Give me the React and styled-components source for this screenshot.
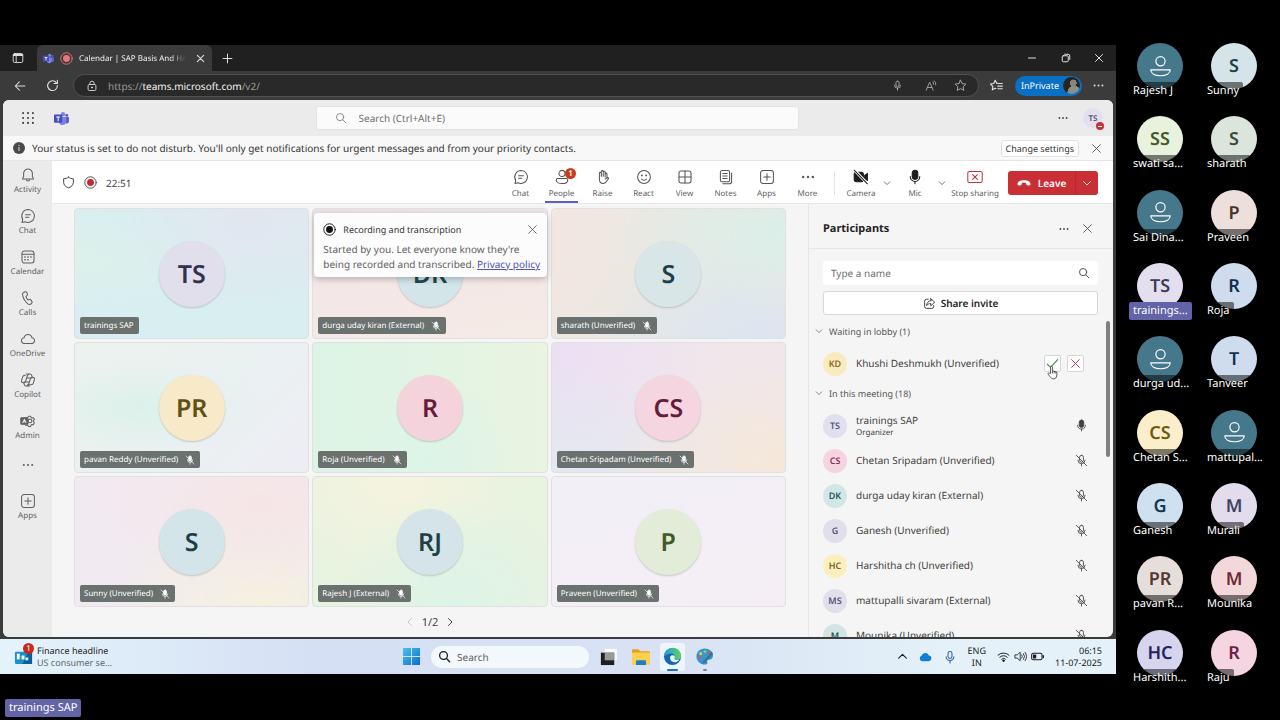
import { useState } from "react";
import styled, { createGlobalStyle, css } from "styled-components";

const people = [
  { name: "Rajesh J" },
  { name: "Sunny", initials: "S", bg: "#d5e4e9", fg: "#1d4046" },
  { name: "swati sa...", initials: "SS", bg: "#e8f2dc", fg: "#44592a" },
  { name: "sharath", initials: "S", bg: "#dbe5dc", fg: "#3a4a38" },
  { name: "Sai Dina..." },
  { name: "Praveen", initials: "P", bg: "#ecdfdc", fg: "#4d322c" },
  { name: "trainings...", initials: "TS", bg: "#e4dfee", fg: "#3f3a5c", active: true },
  { name: "Roja", initials: "R", bg: "#cfdcee", fg: "#12304f" },
  { name: "durga ud..." },
  { name: "Tanveer", initials: "T", bg: "#cfdcee", fg: "#12304f" },
  { name: "Chetan S...", initials: "CS", bg: "#fbeecb", fg: "#6d5a10" },
  { name: "mattupal..." },
  { name: "Ganesh", initials: "G", bg: "#cfe0ee", fg: "#0f3a55" },
  { name: "Murali", initials: "M", bg: "#e2dcec", fg: "#463f66" },
  { name: "pavan R...", initials: "PR", bg: "#e6dedb", fg: "#54392f" },
  { name: "Mounika", initials: "M", bg: "#f2d8da", fg: "#6e2a38" },
  { name: "Harshith...", initials: "HC", bg: "#d7d5ee", fg: "#26235e" },
  { name: "Raju", initials: "R", bg: "#f5d5e1", fg: "#702044" },
];

const tiles = [
  {
    name: "trainings SAP", initials: "TS", bg: "#e2dfec", fg: "#34304f", muted: false,
    wash: "radial-gradient(at 75% 10%, #e2e6f0 0, transparent 55%), radial-gradient(at 0% 40%, #dcf1ea 0, transparent 50%), #d9eef1",
  },
  {
    name: "durga uday kiran (External)", initials: "DK", bg: "#d3e5e9", fg: "#1d4a4d", muted: true, notice: true,
    wash: "linear-gradient(170deg, #eee3e6 0%, #f3e7e8 50%, #f5ebe4 100%)",
  },
  {
    name: "sharath (Unverified)", initials: "S", bg: "#d8e6e8", fg: "#1d4046", muted: true,
    wash: "radial-gradient(at 100% 20%, #dbefe8 0, transparent 55%), radial-gradient(at 90% 100%, #dbe5f1 0, transparent 55%), linear-gradient(120deg, #f4e6e0, #e8e8e4 55%)",
  },
  {
    name: "pavan Reddy (Unverified)", initials: "PR", bg: "#f8e9c8", fg: "#5f5110", muted: true,
    wash: "radial-gradient(at 30% 50%, #dcf1ea 0, transparent 50%), linear-gradient(135deg, #ecf2ee, #eaf1f1 50%, #ededf4)",
  },
  {
    name: "Roja (Unverified)", initials: "R", bg: "#f4d3dc", fg: "#651c3c", muted: true,
    wash: "radial-gradient(at 50% 90%, #dcf4e8 0, transparent 50%), linear-gradient(90deg, #dcf4e6, #e9f4e1)",
  },
  {
    name: "Chetan Sripadam (Unverified)", initials: "CS", bg: "#f4d5e0", fg: "#651c3c", muted: true,
    wash: "radial-gradient(at 100% 90%, #f5e8d9 0, transparent 55%), radial-gradient(at 10% 100%, #e3e9f0 0, transparent 60%), linear-gradient(100deg, #ebdff5, #f1e7ea 70%)",
  },
  {
    name: "Sunny (Unverified)", initials: "S", bg: "#d3e5e9", fg: "#1d4046", muted: true,
    wash: "radial-gradient(at 80% 20%, #f6e5e6 0, transparent 60%), radial-gradient(at 80% 100%, #f5f1df 0, transparent 60%), #f1eaf1",
  },
  {
    name: "Rajesh J (External)", initials: "RJ", bg: "#d4e4e8", fg: "#1d4046", muted: true,
    wash: "radial-gradient(at 60% 100%, #dcf4e8 0, transparent 60%), radial-gradient(at 35% 0%, #f6f3df 0, transparent 60%), #e8f3e0",
  },
  {
    name: "Praveen (Unverified)", initials: "P", bg: "#e3ecd8", fg: "#44592a", muted: true,
    wash: "linear-gradient(160deg, #f2eff6, #f5eef5)",
  },
];

const attendees = [
  { name: "trainings SAP", role: "Organizer", initials: "TS", bg: "#e0e0ee", fg: "#56567a", live: true },
  { name: "Chetan Sripadam (Unverified)", initials: "CS", bg: "#f6d3e0", fg: "#8c2f57" },
  { name: "durga uday kiran (External)", initials: "DK", bg: "#d3e6e6", fg: "#275a5c" },
  { name: "Ganesh (Unverified)", initials: "G", bg: "#e1dfec", fg: "#56527a" },
  { name: "Harshitha ch (Unverified)", initials: "HC", bg: "#fbf0bd", fg: "#7d671c" },
  { name: "mattupalli sivaram (External)", initials: "MS", bg: "#e0dfea", fg: "#56527a" },
  { name: "Mounika (Unverified)", initials: "M", bg: "#d3e4e2", fg: "#24524e" },
];

const paths = {
  activity: <><path d="M10 2.5a5.5 5.5 0 0 0-5.5 5.5v4L3 15h14l-1.500-3V8A5.500 5.500 0 0 0 10 2.500z" /><path d="M8 15.500a2 2 0 0 0 4 0" /></>,
  chat: <><path d="M10 2a8 8 0 1 1-3.700 15.100L2.500 18l.9-3.800A8 8 0 0 1 10 2z" /><path d="M7 8.500h6M7 11.500h4" /></>,
  calendar: <><rect x="2.500" y="2.500" width="15" height="15" rx="3" /><path d="M2.500 6.500h15" /><path d="M6 10h.5M9.700 10h.5M13.400 10h.5M6 13.500h.5M9.700 13.500h.5" strokeWidth="1.700" /></>,
  calls: <path d="M6.200 2.300 4.600 3c-1.300.6-1.700 2-1.400 3.500.9 4.300 3.300 8.200 6.600 10.800 1.200.9 2.600 1.100 3.700.2l1.100-1c.7-.6.8-1.500.3-2.200l-1.400-1.900c-.4-.6-1.200-.8-1.800-.5l-1.700.6C8.700 11.200 7.800 9.600 7.500 8l1.300-1.200c.5-.5.7-1.100.5-1.800l-.8-2c-.4-.7-1.400-1.100-2.300-.7z" />,
  cloud: <path d="M5.500 15.500a3.500 3.500 0 0 1-.4-7 5 5 0 0 1 9.800 0 3.500 3.500 0 0 1-.4 7z" />,
  copilot: <><path d="M8 2.500h4.500c1 0 1.700.6 2 1.500l.7 2.500h.8c2 0 2.500 1.300 2 3l-1.200 4c-.5 1.700-1.300 2.500-2.800 2.500H9.500" /><path d="M12 17.500H7.500c-1 0-1.700-.6-2-1.500l-.7-2.500H4c-2 0-2.500-1.300-2-3l1.200-4C3.700 4.800 4.500 4 6 4h1" /><path d="M11 2.700c-1 .3-1.500 1-1.800 2L6.800 12c-.3 1-.8 1.500-1.800 1.500M9 17.300c1-.3 1.500-1 1.800-2L13.200 8c.3-1 .8-1.500 1.800-1.500M8.300 7.500H15M5 12.500h6.700" /></>,
  admin: <><path d="M7 5.500 9.500 6l1.300-2h2.400l1 2.300 2.500-.3 1.300 2.200-1.500 2 1.500 2-1.300 2.500-2.500-.2-1 2.300h-2.400L9.500 15l-2.500.5" /><rect x="1" y="6" width="9" height="8" rx="1" fill="currentColor" /><circle cx="12.500" cy="10" r="2.300" /><path d="M3.500 12 5.500 8l2 4M4.200 11h2.500" stroke="#ebebeb" /></>,
  apps: <><rect x="2" y="2" width="16" height="16" rx="3" /><path d="M10 6v8M6 10h8" /></>,
  dots: <g fill="currentColor" stroke="none"><circle cx="4" cy="10" r="1.500" /><circle cx="10" cy="10" r="1.500" /><circle cx="16" cy="10" r="1.500" /></g>,
  people: <><circle cx="10" cy="5.500" r="3.800" /><path d="M4.500 12h11c1 0 1.700.7 1.700 1.600 0 3-3.200 4.600-7.200 4.600s-7.200-1.600-7.200-4.600c0-.9.700-1.600 1.700-1.600z" /></>,
  raise: <path d="M5.500 11V5.200a1.200 1.200 0 0 1 2.400 0V9M7.900 9V3.200a1.200 1.200 0 0 1 2.400 0V9M10.300 9V3.900a1.200 1.200 0 0 1 2.400 0v6M12.700 10V6a1.200 1.200 0 0 1 2.300 0v5.500M5.500 11v1.500c0 3.500 1.800 5.700 4.500 5.700 2 0 3.300-.9 4.200-2.600l2.700-3.600c.5-1-.9-1.900-1.900-1.100l-2.300 1.700M5.500 5.500v6" />,
  react: <><circle cx="10" cy="10" r="8" /><path d="M6.800 12.500a4.200 4.200 0 0 0 6.400 0" /><g fill="currentColor" stroke="none"><circle cx="7.400" cy="8" r="1.200" /><circle cx="12.600" cy="8" r="1.200" /></g></>,
  view: <><rect x="2.500" y="2.500" width="15" height="15" rx="2.500" /><path d="M10 2.500v15M2.500 10h15" /></>,
  notes: <><rect x="3" y="2" width="11.500" height="14" rx="2" /><path d="M6 5.500h5.500M6 8.700h5.500M6 12h5.500M17 5v10.500a3 3 0 0 1-3 3H6" /></>,
  camera: <><rect x="1.500" y="4" width="11.500" height="12" rx="2.500" fill="currentColor" /><path d="m14 8.500 4-3v9l-4-3z" fill="currentColor" /><path d="m2 1.500 16 17" stroke="#fff" strokeWidth="3.400" /><path d="m1.500 1.500 16.500 17" /></>,
  mic: <><rect x="6.500" y="1.500" width="7" height="11.500" rx="3.500" fill="currentColor" /><path d="M4 9.500a6 6 0 0 0 12 0M10 15.500v3" /></>,
  micLine: <><rect x="7.200" y="2" width="5.600" height="10" rx="2.800" /><path d="M4.500 9.500a5.500 5.500 0 0 0 11 0M10 15v3.500" /></>,
  micOff: <><rect x="7" y="2" width="6" height="10.500" rx="3" /><path d="M4.500 9.500a5.500 5.500 0 0 0 11 0M10 15v3.500M2 2l16 16" /></>,
  micOffSolid: <><rect x="7" y="2" width="6" height="10.500" rx="3" fill="currentColor" /><path d="M4.500 9.500a5.500 5.500 0 0 0 11 0M10 15v3.500M2 2l16 16" /></>,
  stop: <><rect x="1" y="3" width="18" height="14" rx="2" /><path d="m7 7 6 6M13 7l-6 6" /></>,
  down: <path d="m3 7 7 7 7-7" />,
  up: <path d="m3 13 7-7 7 7" />,
  left: <path d="m13 3-7 7 7 7" />,
  right: <path d="m7 3 7 7-7 7" />,
  close: <path d="m3 3 14 14M17 3 3 17" />,
  plus: <path d="M10 2v16M2 10h16" />,
  check: <path d="m2 11 5 5L18 4" />,
  search: <><circle cx="8.500" cy="8.500" r="6" /><path d="m13 13 5 5" /></>,
  shield: <path d="M10 1.800c2.300 1.700 4.700 2.400 7.500 2.500v5.200c0 4.200-2.700 7-7.500 8.700-4.800-1.700-7.500-4.500-7.500-8.700V4.300c2.800-.1 5.200-.8 7.500-2.500z" />,
  share: <><path d="M8 3.500H5.500a3 3 0 0 0-3 3v8a3 3 0 0 0 3 3h8a3 3 0 0 0 3-3V13" /><path d="M12 2.500 18 8l-6 5.500v-3.300c-3 0-5 .8-6.500 3C5.800 9 8 6 12 5.700z" /></>,
  back: <path d="M18 10H2.500M9 3l-7 7 7 7" />,
  reload: <><path d="M16.500 6.500A7.500 7.500 0 1 0 17.500 10" /><path d="M17.500 2v5h-5" /></>,
  lock: <><rect x="3.500" y="7.500" width="13" height="10" rx="2" /><path d="M6.500 7.500V5.500a3.500 3.500 0 0 1 7 0v2" /><circle cx="10" cy="12.500" r="1" fill="currentColor" /></>,
  star: <path d="m10 1.800 2.500 5.200 5.700.8-4.100 4 1 5.700-5.100-2.700-5.100 2.700 1-5.700-4.100-4 5.700-.8z" />,
  favorites: <><path d="M12.300 6.500 10.500 7 8 2 5.700 7l-5 .8 3.700 3.600-.9 5.300L8 14.200l1 .5" /><path d="M13 7h6M12 11h7M12 15h7" /></>,
  readAloud: <><path d="m2 17 5.500-13h.6L13.500 17M4 12.500h7.500" /><path d="M13 3a4 4 0 0 1 1.500 4M15.500 1.500A7 7 0 0 1 18 8" /></>,
  tabs: <><rect x="2" y="2.500" width="16" height="15" rx="2.500" /><path d="M3 5h14" strokeWidth="3" /><path d="M7 6v11" /></>,
  minimize: <path d="M3 10h14" />,
  restore: <><rect x="2.500" y="5.500" width="12" height="12" rx="2" /><path d="M6 3.200c.4-.5 1-.7 1.700-.7H14a3.500 3.500 0 0 1 3.500 3.500v6.300c0 .7-.3 1.300-.8 1.700" /></>,
  wifi: <><path d="M1.500 8a12 12 0 0 1 17 0M4.300 11a8 8 0 0 1 11.400 0M7.200 14a4 4 0 0 1 5.600 0" /><circle cx="10" cy="16.500" r="1.200" fill="currentColor" /></>,
  sound: <><path d="M2 7.500h3L9.500 3.500v13L5 12.500H2z" /><path d="M12 7.500a4 4 0 0 1 0 5M14.500 5.500a7 7 0 0 1 0 9M17 3.500a10 10 0 0 1 0 13" /></>,
  battery: <><rect x="1" y="5" width="16" height="10" rx="2.500" /><path d="M19 8.500v3" strokeWidth="2" /><rect x="3" y="7" width="5" height="6" fill="currentColor" stroke="none" /></>,
};

const Icon = ({ name, size = 16, weight = 1.3 }) => (
  <Glyph viewBox="0 0 20 20" $size={size} $weight={weight} aria-hidden="true">
    {paths[name]}
  </Glyph>
);

const TeamsLogo = ({ size = 16 }) => (
  <Glyph viewBox="0 0 20 20" $size={size} $weight={0} aria-hidden="true">
    <g stroke="none">
      <circle cx="17" cy="5.500" r="2" fill="#5b62c5" />
      <circle cx="12" cy="4.200" r="2.900" fill="#7b83eb" />
      <path d="M14 8h5.200c.5 0 .8.300.8.800v4.700a3.200 3.200 0 0 1-6 1.500z" fill="#5b62c5" />
      <path d="M7 8h8c.6 0 1 .4 1 1v5a4.700 4.700 0 0 1-9.300 1z" fill="#7b83eb" />
      <rect x="0" y="4.500" width="11" height="11" rx="1" fill="#464eb8" />
      <path d="M3 7.200h5v1.300H6.200v5H4.800v-5H3z" fill="#fff" />
    </g>
  </Glyph>
);

const PersonGlyph = () => (
  <Glyph viewBox="0 0 20 20" $size={21} $weight={1.1} aria-hidden="true">
    <circle cx="10" cy="5" r="4.400" />
    <path d="M.7 13.200h18.600c0 3.500-4 5.600-9.300 5.600S.7 16.700.7 13.200z" />
  </Glyph>
);

const RecordDot = ({ color, ring }) => (
  <Glyph viewBox="0 0 20 20" $size={13} $weight={1.4} aria-hidden="true">
    <circle cx="10" cy="10" r="8.800" stroke={ring} />
    <circle cx="10" cy="10" r="5.300" fill={color} stroke="none" />
  </Glyph>
);

const railItems = [
  ["activity", "Activity"],
  ["chat", "Chat"],
  ["calendar", "Calendar"],
  ["calls", "Calls"],
  ["cloud", "OneDrive"],
  ["copilot", "Copilot"],
  ["admin", "Admin"],
];

const tools = [
  ["chat", "Chat"],
  ["people", "People"],
  ["raise", "Raise"],
  ["react", "React"],
  ["view", "View"],
  ["notes", "Notes"],
  ["apps", "Apps"],
  ["dots", "More"],
];

const Person = ({ person }) => (
  <PersonRow>
    <SmallAvatar $bg={person.bg} $fg={person.fg}>{person.initials}</SmallAvatar>
    <PersonText>
      {person.name}
      {person.role && <Role>{person.role}</Role>}
    </PersonText>
    {person.live ? <Icon name="mic" size={13} /> : <Icon name="micOff" size={13} />}
  </PersonRow>
);

const App = () => {
  const [panel, setPanel] = useState("People");
  const [noticeOpen, setNoticeOpen] = useState(true);

  return (
    <>
      <GlobalStyle />
      <Screen>
        <SharedScreen>
          <Browser>
            {/* TABS */}
            <TabStrip>
              <BrowserButton aria-label="Tab actions" $width={29}><Icon name="tabs" size={12} weight={1.5} /></BrowserButton>
              <Tab>
                <TeamsLogo size={11} />
                <RecordDot color="#e8757c" ring="#e8757c" />
                <TabTitle>Calendar | SAP Basis And HA</TabTitle>
                <BrowserButton aria-label="Close tab" $width={16}><Icon name="close" size={9} weight={2.4} /></BrowserButton>
              </Tab>
              <BrowserButton aria-label="New tab" $width={30}><Icon name="plus" size={11} weight={1.8} /></BrowserButton>
              <WindowButtons>
                <BrowserButton aria-label="Minimize" $width={34}><Icon name="minimize" size={10} weight={2} /></BrowserButton>
                <BrowserButton aria-label="Restore" $width={33}><Icon name="restore" size={10} weight={2} /></BrowserButton>
                <BrowserButton aria-label="Close" $width={34}><Icon name="close" size={10} weight={2} /></BrowserButton>
              </WindowButtons>
            </TabStrip>

            {/* ADDRESS BAR */}
            <AddressRow>
              <BrowserButton aria-label="Back" $width={32}><Icon name="back" size={12} weight={1.700} /></BrowserButton>
              <BrowserButton aria-label="Refresh" $width={32}><Icon name="reload" size={13} weight={1.7} /></BrowserButton>
              <Address>
                <Icon name="lock" size={12} weight={1.600} />
                <Url>https://<b>teams.microsoft.com</b>/v2/</Url>
                <AddressIcons>
                  <Icon name="micLine" size={11} weight={1.700} />
                  <Icon name="readAloud" size={12} weight={1.500} />
                  <Icon name="star" size={13} weight={1.500} />
                </AddressIcons>
              </Address>
              <BrowserButton aria-label="Favorites" $width={36}><Icon name="favorites" size={13} weight={1.700} /></BrowserButton>
              <InPrivate>
                InPrivate
                <ProfilePhoto />
              </InPrivate>
              <BrowserButton aria-label="Settings and more" $width={32}><Icon name="dots" size={13} /></BrowserButton>
            </AddressRow>

            <WebView>
              <TeamsHeader>
                <HeaderLeft>
                  <IconButton aria-label="App launcher" $width={24}>
                    <Glyph viewBox="0 0 20 20" $size={14} $weight={0}>
                      {[3, 10, 17].map((y) => [3, 10, 17].map((x) => (
                        <circle key={`${x}-${y}`} cx={x} cy={y} r="1.500" fill="#444" stroke="none" />
                      )))}
                    </Glyph>
                  </IconButton>
                  <TeamsLogo size={15} />
                </HeaderLeft>
                <TopSearch>
                  <Icon name="search" size={12} />
                  <TopSearchInput aria-label="Search" placeholder="Search (Ctrl+Alt+E)" />
                </TopSearch>
                <HeaderRight>
                  <IconButton aria-label="Settings and more" $width={24}><Icon name="dots" size={12} /></IconButton>
                  <ProfileBadge>
                    TS
                    <Presence />
                  </ProfileBadge>
                </HeaderRight>
              </TeamsHeader>

              <StatusBanner>
                <Info viewBox="0 0 12 12" aria-hidden="true">
                  <circle cx="6" cy="6" r="6" fill="#4a4a4a" />
                  <path d="M6 5v4M6 3v1" stroke="#ddd" />
                </Info>
                <BannerText>
                  Your status is set to do not disturb. You'll only get notifications for urgent messages and from your priority contacts.
                </BannerText>
                <ChangeSettings>Change settings</ChangeSettings>
                <IconButton aria-label="Dismiss" $width={34}><Icon name="close" size={11} weight={1.500} /></IconButton>
              </StatusBanner>

              <TeamsBody>
                <Rail>
                  {railItems.map(([icon, label]) => (
                    <RailItem key={label}>
                      <Icon name={icon} size={16} />
                      {label}
                    </RailItem>
                  ))}
                  <RailMore aria-label="More apps"><Icon name="dots" size={14} /></RailMore>
                  <RailItem><Icon name="apps" size={16} />Apps</RailItem>
                </Rail>

                <Meeting>
                  {/* MEETING TOOLBAR */}
                  <Toolbar>
                    <Timer>
                      <Icon name="shield" size={13} weight={1.500} />
                      <RecordDot color="#c4282d" ring="#444" />
                      22:51
                    </Timer>
                    {tools.map(([icon, label]) => (
                      <Tool key={label} $active={label === panel} onClick={() => setPanel(label)}>
                        <Icon name={icon} size={16} />
                        {label}
                        {label === "People" && <ToolBadge>1</ToolBadge>}
                      </Tool>
                    ))}
                    <ToolDivider />
                    <Tool $width={36} $dark><Icon name="camera" size={16} />Camera</Tool>
                    <IconButton aria-label="Camera options" $width={16}><Icon name="down" size={8} weight={1.800} /></IconButton>
                    <Tool $width={40} $dark><Icon name="mic" size={16} />Mic</Tool>
                    <IconButton aria-label="Mic options" $width={14}><Icon name="down" size={8} weight={1.800} /></IconButton>
                    <Tool $width={52} $danger><Icon name="stop" size={16} />Stop sharing</Tool>
                    <LeaveGroup>
                      <Leave>
                        <Glyph viewBox="0 0 20 20" $size={14} $weight={0} aria-hidden="true">
                          <path d="M10 6c5 0 9.500 2 9.300 5.600-.1 1.600-.8 2.300-2.200 2l-2.500-.5c-.9-.2-1.300-.8-1.400-1.700l-.1-1.300c-2-.6-4.200-.6-6.200 0l-.1 1.300c-.1.900-.5 1.500-1.400 1.700l-2.500.5c-1.400.3-2.100-.4-2.200-2C.5 8 5 6 10 6z" fill="currentColor" />
                        </Glyph>
                        Leave
                      </Leave>
                      <LeaveMore aria-label="Leave options"><Icon name="down" size={10} weight={1.800} /></LeaveMore>
                    </LeaveGroup>
                  </Toolbar>

                  <MeetingBody>
                    <Stage>
                      <Gallery>
                        {tiles.map((tile) => (
                          <Tile key={tile.name} $wash={tile.wash}>
                            <BigAvatar $bg={tile.bg} $fg={tile.fg}>{tile.initials}</BigAvatar>
                            <TileName>
                              {tile.name}
                              {tile.muted && <Icon name="micOffSolid" size={10} weight={1.300} />}
                            </TileName>
                            {tile.notice && noticeOpen && (
                              <Notice>
                                <NoticeHead>
                                  <RecordDot color="#111" ring="#111" />
                                  <NoticeTitle>Recording and transcription</NoticeTitle>
                                  <IconButton aria-label="Close" $width={16} onClick={() => setNoticeOpen(false)}>
                                    <Icon name="close" size={11} weight={1.400} />
                                  </IconButton>
                                </NoticeHead>
                                Started by you. Let everyone know they're being recorded and transcribed.{" "}
                                <PolicyLink href="#privacy">Privacy policy</PolicyLink>
                              </Notice>
                            )}
                          </Tile>
                        ))}
                      </Gallery>
                      <Pager>
                        <PageButton aria-label="Previous page" disabled><Icon name="left" size={10} weight={1.700} /></PageButton>
                        1/2
                        <PageButton aria-label="Next page"><Icon name="right" size={10} weight={2} /></PageButton>
                      </Pager>
                    </Stage>

                    {/* PARTICIPANTS */}
                    <Panel>
                      <PanelHead>
                        <PanelTitle>Participants</PanelTitle>
                        <IconButton aria-label="More options" $width={24}><Icon name="dots" size={12} /></IconButton>
                        <IconButton aria-label="Close panel" $width={22}><Icon name="close" size={11} weight={1.500} /></IconButton>
                      </PanelHead>
                      <PanelActions>
                        <NameField>
                          <NameInput aria-label="Type a name" placeholder="Type a name" />
                          <Icon name="search" size={12} weight={1.500} />
                        </NameField>
                        <ShareInvite><Icon name="share" size={13} />Share invite</ShareInvite>
                      </PanelActions>
                      <PeopleList>
                        <Section><Icon name="down" size={8} weight={1.700} />Waiting in lobby (1)</Section>
                        <PersonRow>
                          <SmallAvatar $bg="#f8ebbd" $fg="#86701f">KD</SmallAvatar>
                          <PersonText>Khushi Deshmukh (Unverified)</PersonText>
                          <LobbyButtons>
                            <LobbyButton aria-label="Admit" $color="#3a8a3f">
                              <Icon name="check" size={13} weight={1.600} />
                              <Pointer viewBox="0 0 14 18" aria-hidden="true">
                                <path d="M4.500 10V2.200a1.200 1.200 0 0 1 2.400 0V7l4.500 1c1 .2 1.500.9 1.400 1.900l-.5 3.600c-.2 1.800-1.300 3.500-3.300 3.500H7.500c-1.300 0-2-.5-2.700-1.600L1.300 11c-.5-1 .8-1.800 1.600-1.100z" fill="#fff" stroke="#333" />
                                <path d="M7 7v3M9.200 7.500V10M11.300 8v2.500" stroke="#333" />
                              </Pointer>
                            </LobbyButton>
                            <LobbyButton aria-label="Deny" $color="#c4314b"><Icon name="close" size={11} weight={1.700} /></LobbyButton>
                          </LobbyButtons>
                        </PersonRow>
                        <Section><Icon name="down" size={8} weight={1.700} />In this meeting (18)</Section>
                        {attendees.map((person) => (
                          <Person key={person.name} person={person} />
                        ))}
                        <ScrollThumb />
                      </PeopleList>
                    </Panel>
                  </MeetingBody>
                </Meeting>
              </TeamsBody>
            </WebView>
          </Browser>

          {/* TASKBAR */}
          <Taskbar>
            <Widget>
              <WidgetIcon>
                <Glyph viewBox="0 0 20 20" $size={19} $weight={0} aria-hidden="true">
                  <rect x="1" y="5" width="18" height="13" rx="1.500" fill="#1893c9" />
                  <path d="M15 5h4v13H9z" fill="#0a5f9c" />
                  <rect x="3" y="7" width="3" height="6" fill="#fff" />
                  <rect x="8" y="9" width="3" height="4" fill="#fff" />
                  <rect x="12" y="11" width="3" height="3" fill="#dff" />
                </Glyph>
                <WidgetBadge>1</WidgetBadge>
              </WidgetIcon>
              <WidgetText>
                <strong>Finance headline</strong>
                US consumer se...
              </WidgetText>
            </Widget>

            <TaskIcons>
              <TaskButton aria-label="Start">
                <Glyph viewBox="0 0 20 20" $size={19} $weight={0}>
                  <defs>
                    <linearGradient id="win" x1="0" y1="0" x2="1" y2="1">
                      <stop offset="0" stopColor="#4cc2ee" />
                      <stop offset="1" stopColor="#0a6fcb" />
                    </linearGradient>
                  </defs>
                  <path d="M1 1h8.500v8.500H1zM10.500 1H19v8.500h-8.500zM1 10.500h8.500V19H1zM10.500 10.500H19V19h-8.500z" fill="url(#win)" />
                </Glyph>
              </TaskButton>
              <TaskSearch>
                <Icon name="search" size={13} weight={2} />
                <TaskInput aria-label="Search Windows" placeholder="Search" />
              </TaskSearch>
              <TaskButton aria-label="Task view">
                <Glyph viewBox="0 0 20 20" $size={19} $weight={0}>
                  <rect x="6" y="2" width="13" height="12" fill="#fafafa" />
                  <rect x="2" y="6" width="14" height="13" fill="#1f1f1f" />
                  <path d="M6 6h10v8H6z" fill="#9a9a9a" />
                </Glyph>
              </TaskButton>
              <TaskButton aria-label="File Explorer">
                <Glyph viewBox="0 0 20 20" $size={20} $weight={0}>
                  <path d="M1 3.500c0-.8.500-1.300 1.300-1.300h5l2 2h8.400c.8 0 1.300.5 1.300 1.300V8H1z" fill="#e2a11c" />
                  <rect x="1" y="5.500" width="18" height="12.500" rx="1" fill="#fbd04f" />
                  <path d="M5 18v-3.500c0-.8.500-1.300 1.300-1.300h7.400c.8 0 1.300.5 1.300 1.300V18z" fill="#1c7fc4" />
                </Glyph>
              </TaskButton>
              <TaskButton aria-label="Microsoft Edge" $active>
                <Glyph viewBox="0 0 20 20" $size={19} $weight={0}>
                  <defs>
                    <linearGradient id="edge" x1="0" y1="0" x2="1" y2="0">
                      <stop offset="0" stopColor="#1e9bd7" />
                      <stop offset="1" stopColor="#5fd35f" />
                    </linearGradient>
                  </defs>
                  <circle cx="10" cy="10" r="9" fill="#1566b7" />
                  <path d="M1 10a9 9 0 0 1 18-.5c0 2.800-2 4.300-4.300 4.300-2 0-3-.8-2.700-1.600.7-.8.700-1.400.5-2.200C12 7.500 9.500 6.500 7 7 4 7.500 1.800 9 1 10z" fill="url(#edge)" />
                  <path d="M7.500 10.500c.5-2 3-2.500 4.500-1.200.8 1 .7 2 0 2.900-.3.800.7 1.600 2.700 1.600 1 0 1.800-.2 2.600-.6-1.300 2.300-3.500 3-5.300 2.800-3-.3-5-2.700-4.500-5.500z" fill="#e9f6fb" />
                </Glyph>
              </TaskButton>
              <TaskButton aria-label="Paint" $running>
                <Glyph viewBox="0 0 20 20" $size={19} $weight={0}>
                  <path d="M10 1.500c5 0 9 3 9 7.500 0 3-2 4.500-4.500 4.500-1.500 0-2 1-1.500 2.500.4 1.500-.5 2.500-2.500 2.500-5 0-9-3.800-9-8.500s3.500-8.500 8.500-8.500z" fill="#2f97d3" />
                  <circle cx="6" cy="7" r="1.700" fill="#f5c33b" />
                  <circle cx="10.500" cy="4.800" r="1.500" fill="#8fd06a" />
                  <circle cx="5" cy="11.500" r="1.600" fill="#e4573d" />
                  <path d="M17.500 5 9 15l-2 3 3.300-1.500L19 7z" fill="#3f6f86" />
                  <circle cx="14.500" cy="6" r="1.500" fill="#e4573d" />
                </Glyph>
              </TaskButton>
            </TaskIcons>

            <Tray>
              <Icon name="up" size={11} weight={2} />
              <OneDrive viewBox="0 0 14 10" aria-hidden="true">
                <path d="M3.300 9.500A3 3 0 0 1 2.800 3.700 4.200 4.200 0 0 1 10.500 3a3.300 3.300 0 0 1 .3 6.500z" fill="#0f7fd6" />
              </OneDrive>
              <TrayMic><Icon name="micLine" size={14} weight={1.500} /></TrayMic>
              <TrayText $align="center">ENG<br />IN</TrayText>
              <TrayStatus>
                <Icon name="wifi" size={13} weight={1.500} />
                <Icon name="sound" size={13} weight={1.300} />
                <Icon name="battery" size={13} weight={1.600} />
              </TrayStatus>
              <TrayText $align="right">06:15<br />11-07-2025</TrayText>
            </Tray>
          </Taskbar>

          <Footer>
            <SpeakerName>trainings SAP</SpeakerName>
          </Footer>
        </SharedScreen>

        <Attendance>
          {people.map((person) => (
            <Seat key={person.name}>
              <SeatAvatar $bg={person.bg} $fg={person.fg}>{person.initials || <PersonGlyph />}</SeatAvatar>
              <SeatName $active={person.active}>{person.name}</SeatName>
            </Seat>
          ))}
        </Attendance>
      </Screen>
    </>
  );
};

export default App;

const GlobalStyle = createGlobalStyle`
  * {
    box-sizing: border-box;
  }

  body {
    margin: 0;
    background: #000;
    font-family: "Noto Sans", "Open Sans", sans-serif;
    font-size: 10px;
    color: #424242;
    text-rendering: geometricPrecision;
  }

  button, input {
    font-family: inherit;
    font-size: inherit;
    color: inherit;
    text-rendering: inherit;
    border: none;
    background: none;
    padding: 0;
    margin: 0;
  }

  input:focus {
    outline: none;
  }
`;

const center = css`
  display: flex;
  align-items: center;
  justify-content: center;
`;

const Glyph = styled.svg`
  width: ${(props) => props.$size}px;
  height: ${(props) => props.$size}px;
  flex: none;
  fill: none;
  stroke: currentColor;
  stroke-width: ${(props) => props.$weight};
  stroke-linecap: round;
  stroke-linejoin: round;
`;

const Screen = styled.div`
  display: flex;
  height: 100vh;
  background: #000;
`;

const SharedScreen = styled.main`
  flex: 1;
  min-width: 0;
  display: flex;
  flex-direction: column;
  padding-top: 45px;
`;

const Browser = styled.div`
  flex: 1;
  min-height: 0;
  display: flex;
  flex-direction: column;
  background: #3b3b3b;
  padding-bottom: 2px;
`;

const TabStrip = styled.div`
  display: flex;
  align-items: center;
  height: 26px;
  padding-left: 3px;
  background: #202020;
  color: #e8e8e8;
`;

const BrowserButton = styled.button`
  ${center}
  flex: none;
  width: ${(props) => props.$width}px;
  height: 20px;
  color: #e0e0e0;
`;

const Tab = styled.div`
  display: flex;
  align-items: center;
  gap: 6px;
  height: 26px;
  width: 175px;
  margin-left: 5px;
  padding: 0 4px 0 6px;
  border-radius: 6px 6px 0 0;
  background: #3b3b3b;
`;

const TabTitle = styled.span`
  flex: 1;
  min-width: 0;
  overflow: hidden;
  white-space: nowrap;
  font-size: 8px;
  color: #f0f0f0;
  mask-image: linear-gradient(90deg, #000 85%, transparent);
`;

const WindowButtons = styled.div`
  display: flex;
  margin-left: auto;
`;

const AddressRow = styled.div`
  display: flex;
  align-items: center;
  height: 29px;
  padding: 0 2px 0 4px;
`;

const Address = styled.div`
  flex: 1;
  display: flex;
  align-items: center;
  gap: 10px;
  height: 23px;
  margin-left: 5px;
  padding: 0 11px 0 12px;
  border: 1px solid #505050;
  border-radius: 12px;
  background: #292929;
  color: #d0d0d0;
`;

const Url = styled.span`
  font-size: 10px;
  color: #9a9a9a;

  b {
    font-weight: 400;
    color: #f4f4f4;
  }
`;

const AddressIcons = styled.div`
  display: flex;
  align-items: center;
  gap: 22px;
  margin-left: auto;
  color: #a8a8a8;

  svg:last-child {
    margin-left: -5px;
  }
`;

const InPrivate = styled.button`
  display: flex;
  align-items: center;
  gap: 4px;
  height: 20px;
  padding: 0 2px 0 6px;
  border-radius: 10px;
  background: #0a70c4;
  color: #fff;
  font-size: 9px;
`;

const ProfilePhoto = styled.span`
  width: 17px;
  height: 17px;
  border-radius: 50%;
  background: radial-gradient(circle at 60% 35%, #8b8478 0 22%, transparent 24%),
    radial-gradient(circle at 65% 90%, #8b8f8a 0 34%, transparent 36%), #262422;
`;

const WebView = styled.div`
  flex: 1;
  min-height: 0;
  display: flex;
  flex-direction: column;
  margin: 0 3px;
  border-radius: 6px;
  overflow: hidden;
  background: #f5f5f5;
`;

const IconButton = styled.button`
  ${center}
  flex: none;
  width: ${(props) => props.$width}px;
  height: 20px;
  color: #424242;
`;

const TeamsHeader = styled.header`
  display: grid;
  grid-template-columns: 1fr minmax(0, 483px) 1fr;
  align-items: center;
  height: 36px;
  padding-right: 2px;
  background: #ebebeb;
`;

const HeaderLeft = styled.div`
  display: flex;
  align-items: center;
  gap: 14px;
  padding-left: 13px;
`;

const TopSearch = styled.div`
  display: flex;
  align-items: center;
  gap: 12px;
  height: 24px;
  padding: 0 18px;
  border: 1px solid #e4e4e4;
  border-radius: 3px;
  background: #fbfbfb;
  color: #707070;
`;

const TopSearchInput = styled.input`
  flex: 1;
  min-width: 0;

  &::placeholder {
    color: #707070;
    opacity: 1;
  }
`;

const HeaderRight = styled.div`
  display: flex;
  align-items: center;
  justify-content: flex-end;
  gap: 8px;
  padding-right: 8px;
`;

const ProfileBadge = styled.button`
  ${center}
  position: relative;
  width: 20px;
  height: 20px;
  border-radius: 50%;
  background: #e2dfee;
  color: #56527a;
  font-size: 8px;
  font-weight: 600;
`;

const Presence = styled.span`
  position: absolute;
  right: -1px;
  bottom: -2px;
  width: 8px;
  height: 8px;
  border-radius: 50%;
  background: linear-gradient(#fff, #fff) center / 4px 1px no-repeat, #c4313a;
`;

const StatusBanner = styled.div`
  display: flex;
  align-items: center;
  height: 25px;
  padding-left: 10px;
  border-bottom: 1px solid #e6e6e6;
  background: #f8f8f8;
`;

const Info = styled.svg`
  flex: none;
  width: 12px;
  height: 12px;
`;

const BannerText = styled.span`
  flex: 1;
  min-width: 0;
  padding-left: 7px;
  font-size: 10px;
  white-space: nowrap;
  overflow: hidden;
  color: #333;
`;

const ChangeSettings = styled.button`
  height: 17px;
  padding: 0 4px;
  border: 1px solid #e0e0e0;
  border-radius: 3px;
  background: #fff;
  font-size: 9px;
  color: #333;
`;

const TeamsBody = styled.div`
  flex: 1;
  min-height: 0;
  display: flex;
`;

const Rail = styled.nav`
  flex: none;
  width: 49px;
  background: #ebebeb;
`;

const RailItem = styled.button`
  ${center}
  flex-direction: column;
  gap: 1px;
  width: 100%;
  height: 41px;
  font-size: 8px;
  line-height: 12px;
  color: #616161;
`;

const RailMore = styled.button`
  ${center}
  width: 100%;
  height: 33px;
  margin-bottom: 6px;
  color: #616161;
`;

const Meeting = styled.section`
  flex: 1;
  min-width: 0;
  display: flex;
  flex-direction: column;
`;

const Toolbar = styled.div`
  display: flex;
  align-items: center;
  flex: none;
  height: 43px;
  padding: 1px 15px 0 0;
  border-bottom: 1px solid #e8e8e8;
  background: #fff;
`;

const Timer = styled.div`
  display: flex;
  align-items: center;
  gap: 9px;
  margin-right: auto;
  padding-left: 10px;
  font-size: 10px;
`;

const toolColor = (props) => {
  if (props.$danger) return "#c4314b";
  if (props.$dark) return "#1c1c1c";
  return "#555";
};

const Tool = styled.button`
  ${center}
  flex-direction: column;
  gap: 3px;
  position: relative;
  flex: none;
  width: ${(props) => props.$width || 41}px;
  height: 41px;
  padding-top: 4px;
  font-size: 8px;
  line-height: 12px;
  white-space: nowrap;
  color: #616161;

  svg {
    color: ${toolColor};
  }

  &::after {
    content: "";
    display: ${(props) => (props.$active ? "block" : "none")};
    position: absolute;
    left: 4px;
    right: 4px;
    bottom: 0;
    height: 2px;
    background: #5b5fc7;
  }
`;

const ToolBadge = styled.span`
  ${center}
  position: absolute;
  top: 6px;
  right: 6px;
  width: 11px;
  height: 11px;
  border-radius: 50%;
  background: #c43e1c;
  color: #fff;
  font-size: 8px;
  font-weight: 600;
`;

const ToolDivider = styled.span`
  width: 1px;
  height: 24px;
  margin: 0 8px 0 6px;
  background: #e4e4e4;
`;

const LeaveGroup = styled.div`
  display: flex;
  height: 24px;
  margin-left: 7px;
  border-radius: 3px;
  background: #cb2f36;
  color: #fff;
`;

const Leave = styled.button`
  ${center}
  gap: 7px;
  width: 67px;
  font-size: 10px;
  font-weight: 600;
`;

const LeaveMore = styled.button`
  ${center}
  width: 23px;
  border-left: 1px solid #b8282f;
`;

const MeetingBody = styled.div`
  flex: 1;
  min-height: 0;
  display: flex;
`;

const Stage = styled.div`
  flex: 1;
  min-width: 0;
  display: flex;
  flex-direction: column;
  padding: 4px 22px 0;
`;

const Gallery = styled.div`
  flex: 1;
  min-height: 0;
  display: grid;
  grid-template-columns: repeat(3, 1fr);
  grid-template-rows: repeat(3, 1fr);
  gap: 3px;
`;

const Tile = styled.article`
  ${center}
  position: relative;
  border: 1px solid #e0e0e2;
  border-radius: 4px;
  background: ${(props) => props.$wash};
`;

const BigAvatar = styled.div`
  ${center}
  width: 66px;
  height: 66px;
  border-radius: 50%;
  background: ${(props) => props.$bg};
  color: ${(props) => props.$fg};
  font-size: 25px;
  font-weight: 600;
  box-shadow: 0 1px 2px rgba(0, 0, 0, 0.18);
`;

const TileName = styled.span`
  display: flex;
  align-items: center;
  gap: 7px;
  position: absolute;
  left: 5px;
  bottom: 4px;
  height: 17px;
  padding: 0 5px 0 4px;
  border-radius: 2px;
  background: #6b716f;
  color: #fff;
  font-size: 8px;
  white-space: nowrap;
`;

const Notice = styled.div`
  position: absolute;
  z-index: 2;
  top: 4px;
  left: 1px;
  right: 0;
  padding: 7px 6px 5px 9px;
  border-radius: 4px;
  background: #fcfcfd;
  box-shadow: 0 2px 6px rgba(0, 0, 0, 0.25);
  font-size: 10px;
  line-height: 15px;
  color: #616161;
`;

const NoticeHead = styled.div`
  display: flex;
  align-items: center;
  gap: 7px;
  height: 18px;
  margin-bottom: 4px;
`;

const NoticeTitle = styled.span`
  flex: 1;
  font-size: 9px;
  color: #333;
`;

const PolicyLink = styled.a`
  color: #4f52b2;
`;

const Pager = styled.div`
  ${center}
  gap: 4px;
  height: 30px;
  font-size: 11px;
`;

const PageButton = styled.button`
  ${center}
  width: 16px;
  height: 16px;

  &:disabled {
    color: #bdbdbd;
  }
`;

const Panel = styled.aside`
  flex: none;
  display: flex;
  flex-direction: column;
  width: 305px;
  border-left: 1px solid #e6e6e6;
`;

const PanelHead = styled.div`
  display: flex;
  align-items: center;
  flex: none;
  height: 45px;
  padding: 5px 15px 0 14px;
  border-bottom: 1px solid #e6e6e6;
`;

const PanelTitle = styled.h2`
  flex: 1;
  margin: 0;
  font-size: 11px;
  font-weight: 700;
  color: #242424;
`;

const PanelActions = styled.div`
  display: flex;
  flex-direction: column;
  gap: 6px;
  padding: 12px 15px 4px 14px;
`;

const NameField = styled.div`
  display: flex;
  align-items: center;
  height: 24px;
  padding: 0 8px;
  border-radius: 3px;
  background: #fff;
`;

const NameInput = styled.input`
  flex: 1;
  min-width: 0;

  &::placeholder {
    color: #707070;
    opacity: 1;
  }
`;

const ShareInvite = styled.button`
  ${center}
  gap: 5px;
  height: 24px;
  border: 1px solid #d8d8d8;
  border-radius: 3px;
  background: #fff;
  font-weight: 600;
  color: #242424;
`;

const PeopleList = styled.div`
  flex: 1;
  min-height: 0;
  position: relative;
  overflow: hidden;
`;

const Section = styled.h3`
  display: flex;
  align-items: center;
  gap: 6px;
  height: 24px;
  margin: 0 0 3px;
  padding-left: 6px;
  font-size: 9px;
  font-weight: 400;
  color: #555;
`;

const PersonRow = styled.div`
  display: flex;
  align-items: center;
  gap: 9px;
  height: 35px;
  padding: 0 25px 0 14px;
`;

const SmallAvatar = styled.span`
  ${center}
  flex: none;
  width: 24px;
  height: 24px;
  border-radius: 50%;
  background: ${(props) => props.$bg};
  color: ${(props) => props.$fg};
  font-size: 9px;
  font-weight: 600;
`;

const PersonText = styled.span`
  flex: 1;
  min-width: 0;
  white-space: nowrap;
  line-height: 13px;
`;

const Role = styled.small`
  display: block;
  font-size: 8px;
  line-height: 11px;
`;

const LobbyButtons = styled.div`
  display: flex;
  gap: 6px;
  margin-right: 4px;
`;

const LobbyButton = styled.button`
  ${center}
  position: relative;
  width: 17px;
  height: 17px;
  border: 1px solid #d6d6d6;
  border-radius: 2px;
  background: #fff;
  color: ${(props) => props.$color};
`;

const Pointer = styled.svg`
  position: absolute;
  left: 2px;
  top: 9px;
  width: 11px;
  height: 15px;
  fill: none;
`;

const ScrollThumb = styled.span`
  position: absolute;
  top: 2px;
  right: 3px;
  width: 4px;
  height: 136px;
  border-radius: 2px;
  background: #808080;
`;

const Taskbar = styled.footer`
  display: grid;
  grid-template-columns: 1fr auto 1fr;
  align-items: center;
  flex: none;
  height: 35px;
  background: linear-gradient(90deg, #e4f3fb 0%, #d5e0f4 28%, #d8e2f4 60%, #e4f1f8 85%);
`;

const Widget = styled.div`
  display: flex;
  align-items: center;
  gap: 4px;
  padding-left: 14px;
`;

const WidgetIcon = styled.span`
  position: relative;
  display: flex;
`;

const WidgetBadge = styled.span`
  ${center}
  position: absolute;
  top: -4px;
  right: -1px;
  width: 11px;
  height: 11px;
  border-radius: 50%;
  background: #c42b1c;
  color: #fff;
  font-size: 8px;
`;

const WidgetText = styled.span`
  font-size: 9px;
  line-height: 12px;
  color: #5e6670;

  strong {
    display: block;
    font-weight: 400;
    color: #1c1c1c;
  }
`;

const TaskIcons = styled.div`
  display: flex;
  align-items: center;
  gap: 7px;
`;

const TaskButton = styled.button`
  ${center}
  position: relative;
  width: 25px;
  height: 28px;
  border-radius: 3px;
  background: ${(props) => (props.$active ? "#eff5fc" : "none")};

  &::after {
    content: "";
    display: ${(props) => (props.$active || props.$running ? "block" : "none")};
    position: absolute;
    bottom: 0;
    width: ${(props) => (props.$active ? 11 : 4)}px;
    height: 2px;
    border-radius: 1px;
    background: ${(props) => (props.$active ? "#1b72c0" : "#7d8794")};
  }
`;

const TaskSearch = styled.div`
  display: flex;
  align-items: center;
  gap: 6px;
  width: 158px;
  height: 22px;
  padding: 0 7px;
  border-radius: 11px;
  background: #f3f8fd;
  color: #1c1c1c;
`;

const TaskInput = styled.input`
  flex: 1;
  min-width: 0;

  &::placeholder {
    color: #5e5e5e;
    opacity: 1;
  }
`;

const Tray = styled.div`
  display: flex;
  align-items: center;
  justify-content: flex-end;
  gap: 11px;
  padding-right: 14px;
  color: #1c1c1c;
`;

const OneDrive = styled.svg`
  width: 13px;
  height: 10px;
`;

const TrayMic = styled.span`
  display: flex;
  color: #2a62a8;
`;

const TrayStatus = styled.div`
  display: flex;
  gap: 4px;
`;

const TrayText = styled.span`
  font-size: 9px;
  line-height: 12px;
  text-align: ${(props) => props.$align};
`;

const Footer = styled.div`
  display: flex;
  align-items: flex-end;
  flex: none;
  height: 46px;
  padding: 0 5px 3px;
`;

const SpeakerName = styled.span`
  height: 18px;
  padding: 0 4px;
  border-radius: 2px;
  background: #6264a7;
  color: #fff;
  font-size: 11px;
  line-height: 18px;
`;

const Attendance = styled.aside`
  flex: none;
  display: grid;
  grid-template-columns: 1fr 1fr;
  grid-template-rows: repeat(9, 1fr);
  width: 164px;
  padding: 43px 9px 17px 7px;
`;

const Seat = styled.div`
  display: flex;
  justify-content: center;
  position: relative;
`;

const SeatAvatar = styled.span`
  ${center}
  width: 46px;
  height: 46px;
  border-radius: 50%;
  background: ${(props) => props.$bg || "#46788c"};
  color: ${(props) => props.$fg || "#fff"};
  font-size: 18px;
  font-weight: 600;
`;

const SeatName = styled.span`
  position: absolute;
  top: 39px;
  left: 6px;
  height: 18px;
  padding: 0 4px;
  border-radius: 2px;
  background: ${(props) => (props.$active ? "#6264a7" : "rgba(0, 0, 0, 0.5)")};
  color: #fff;
  font-size: 11px;
  line-height: 18px;
  white-space: nowrap;
`;
